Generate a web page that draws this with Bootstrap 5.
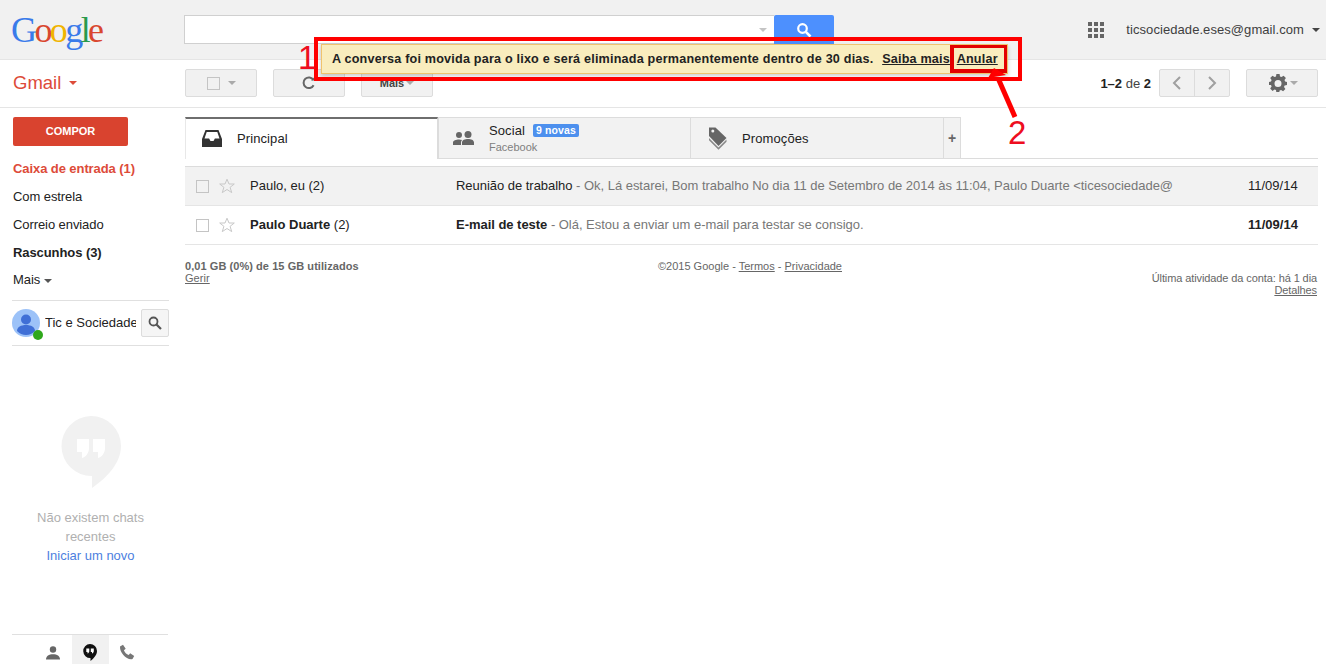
<!DOCTYPE html>
<html lang="pt">
<head>
<meta charset="utf-8">
<title>Gmail</title>
<link href="https://cdn.jsdelivr.net/npm/bootstrap@5.3.0/dist/css/bootstrap.min.css" rel="stylesheet">
<style>
html,body{height:100%;margin:0;overflow:hidden}
body{font-family:"Liberation Sans",Arial,sans-serif;font-size:13px;color:#222;background:#fff;line-height:normal}
.app-shell{height:664px;width:1326px;position:relative;overflow:hidden}
.topbar{height:60px;background:#f1f1f1;border-bottom:1px solid #e5e5e5;padding:15px 6px 0 11px}
.logo-g{width:173px;font-family:"Liberation Serif",serif;font-size:36px;line-height:30px;letter-spacing:-2.6px;flex:none}
.c-b{color:#3a7bea}.c-r{color:#d9472f}.c-y{color:#f0b400}.c-gr{color:#2a9a4b}
.search-wrap{width:650px;height:29px;flex:none}
.search-field{width:590px;height:29px;background:#fff;border:1px solid #d0d0d0;border-right:0;padding-right:7px}
.search-go{width:60px;height:29px;background:#4d90fe;border-radius:2px 2px 0 0}
.caret-d{display:inline-block;width:0;height:0;border-left:4px solid transparent;border-right:4px solid transparent;border-top:4px solid #777}
.caret-l{border-top-color:#c4c4c4}
.caret-red{border-top-color:#dd4b39}
.apps-grid{display:grid;grid-template-columns:repeat(3,4px);grid-auto-rows:4px;gap:2px;margin-right:22px}
.apps-grid i{background:#666;display:block}
.acct{color:#404040;font-size:13px;letter-spacing:.07px}
.toolbar{height:48px;border-bottom:1px solid #e5e5e5;padding:9px 8px 0 13px}
.gmail-mark{width:172px;flex:none;color:#dd4b39;font-size:18.500px;line-height:28px}
.tool-btn{height:28px;width:72px;background:#f1f1f1;border:1px solid #dcdcdc;border-radius:2px;margin-right:16px;flex:none}
.tool-btn b{font-size:11px;color:#444;margin-right:2px}
.chk{width:13px;height:13px;border:1px solid #c4c4c4;display:block;flex:none}
.pager-text{color:#444;margin-right:8px}
.pager-text b{color:#222}
.pager{width:71px;height:28px;background:#f1f1f1;border:1px solid #dcdcdc;border-radius:2px;margin-right:16px}
.pager span{flex:1;height:100%}
.pager span+span{border-left:1px solid #dcdcdc}
.cog-btn{margin-right:0;padding-left:2px}
.cog-btn svg{margin-right:3px}
.body-row{height:556px}
.side{width:185px;flex:none;position:relative;height:556px}
.compose-btn{margin:9px 0 0 13px;width:115px;height:29px;background:#d9432f;border-radius:2px;color:#fff;font-weight:700;font-size:11px;padding-bottom:2px}
.nav-links{list-style:none;margin:9px 0 0;padding:0 0 0 13px;color:#222;letter-spacing:-.08px}
.nav-links li{height:28px;line-height:28px;white-space:nowrap}
.nav-links li.now{color:#dd4b39;font-weight:700}
.nav-links li.more{height:27px;line-height:26px}
.me-row{margin:6px 0 0 12px;width:157px;height:46px;border-top:1px solid #e0e0e0;border-bottom:1px solid #e0e0e0;padding-top:8px;position:relative}
.me-pic{width:28px;height:28px;flex:none;position:relative}
.me-name{width:91px;height:28px;line-height:28px;margin-left:5px;overflow:hidden;white-space:nowrap;color:#222}
.online-dot{position:absolute;left:21px;top:21px;width:10px;height:10px;border-radius:50%;background:#2fa81c}
.me-find{width:28px;height:28px;background:#f5f5f5;border:1px solid #dcdcdc;border-radius:2px;margin-left:5px;flex:none}
.hang-empty{margin-top:70px;width:157px;margin-left:12px;text-align:center;color:#b0b0b0;line-height:19px}
.hang-empty svg{display:block;margin:0 auto 20px}
.hang-empty a{color:#4d7fe0;text-decoration:none}
.hang-tabs{position:absolute;left:12px;bottom:0;width:156px;height:30px;border-top:1px solid #e0e0e0}
.hang-tabs span{width:37px;height:30px;padding-top:5px}
.hang-tabs span.on{background:#f1f1f1}
.main-col{width:1133px;flex:none;padding-top:9px}
.tab-strip{height:42px;border-bottom:1px solid #dcdcdc}
.tab-cell{height:41px;width:253px;background:#f2f2f2;border-top:1px solid #dcdcdc;border-right:1px solid #dcdcdc;flex:none;padding-left:15px}
.tab-cell.first{background:#fff;border-top:2px solid #6e6e6e;border-right:1px solid #dcdcdc;border-left:1px solid #e8e8e8;height:42px;margin-bottom:-1px;padding-left:16px;padding-bottom:2px;position:relative}
.tab-cell.first .tab-ico{margin-right:13px}
.tab-cell.second{border-left:1px solid #dcdcdc;padding-left:14px}
.tab-cell.third{padding-left:17px}
.tab-cell.third .tab-ico{margin-right:12px}
.tab-ico{width:22px;flex:none;margin-right:14px}
.tab-name{font-size:13px;color:#222;letter-spacing:.1px}
.tab-sub{font-size:11px;color:#808080;margin-top:3px;line-height:12px}
.new-pill{background:#4d90ee;color:#fff;font-size:10.500px;font-weight:700;border-radius:2px;padding:0 3px;margin-left:8px;line-height:13px;height:13px;display:inline-block;letter-spacing:.1px;vertical-align:1px}
.tab-plus{width:17px;height:41px;background:#f2f2f2;border-top:1px solid #dcdcdc;border-right:1px solid #dcdcdc;color:#666;font-weight:700;font-size:14px}
.mail-list{margin-top:7px;border-top:1px solid #dcdcdc}
.mail-row{height:39px;border-bottom:1px solid #e5e5e5;padding-left:11px;white-space:nowrap}
.mail-row.seen{background:#f2f2f2}
.star-ico{margin-left:10px;flex:none}
.who{width:206px;margin-left:15px;flex:none;color:#222;padding-bottom:2px}
.what{width:778px;flex:none;overflow:hidden;color:#777;letter-spacing:-.03px;padding-bottom:2px}
.what b{color:#222;font-weight:400}
.unread .who b,.unread .what b,.unread .when{font-weight:700}
.when{width:62px;text-align:left;flex:none;color:#222;margin-left:14px;font-size:13px;padding-bottom:2px}
.foot-row{padding-top:15px;font-size:11px;color:#666;line-height:12px}
.foot-row a{color:#666;text-decoration:underline}
.foot-left{width:430px;letter-spacing:.06px}
.foot-mid{width:270px;text-align:center}
.foot-right{flex:1;text-align:right;padding-top:12px;padding-right:1px;letter-spacing:-.1px}
.notice-bar{position:absolute;left:321px;top:44px;width:687px;height:30px;background:#f9edbe;border:1px solid #f0c36d;box-shadow:0 2px 4px rgba(0,0,0,.2);font-weight:700;font-size:12.600px;padding-left:10px;line-height:28px;color:#222;white-space:nowrap;letter-spacing:.2px}
.notice-bar u{margin-left:5px}
.notice-bar u+u{margin-left:3px}
.mark-box{position:absolute;left:314px;top:37px;width:708px;height:44px;border:4px solid #f00;pointer-events:none}
.mark-inner{position:absolute;left:950px;top:45px;width:57px;height:28px;border:4px solid #e30000;border-top-width:3px;border-right-width:3px}
.mark-num{position:absolute;color:#ee0e20;font-size:33px;line-height:33px}
.mark-arrow{position:absolute;left:985px;top:68px}
</style>
</head>
<body>
<div class="app-shell">
  <header class="topbar d-flex align-items-start">
    <div class="logo-g"><span class="c-b">G</span><span class="c-r">o</span><span class="c-y">o</span><span class="c-b">g</span><span class="c-gr">l</span><span class="c-r">e</span></div>
    <div class="search-wrap d-flex">
      <div class="search-field d-flex align-items-center justify-content-end"><span class="caret-d caret-l"></span></div>
      <div class="search-go d-flex align-items-center justify-content-center">
        <svg width="16" height="16" viewBox="0 0 16 16"><circle cx="6.5" cy="6.5" r="4.3" fill="none" stroke="#fff" stroke-width="2.2"/><path d="M9.8 9.8 14.5 14.5" stroke="#fff" stroke-width="2.6"/></svg>
      </div>
    </div>
    <div class="ms-auto d-flex align-items-center" style="height:29px">
      <div class="apps-grid"><i></i><i></i><i></i><i></i><i></i><i></i><i></i><i></i><i></i></div>
      <span class="acct">ticsociedade.eses@gmail.com</span>
      <span class="caret-d ms-2" style="border-top-color:#444"></span>
    </div>
  </header>

  <div class="toolbar d-flex align-items-start">
    <div class="gmail-mark d-flex align-items-center">Gmail<span class="caret-d caret-red ms-2"></span></div>
    <div class="tool-btn d-flex align-items-center justify-content-center"><span class="chk me-2"></span><span class="caret-d" style="border-top-color:#aaa"></span></div>
    <div class="tool-btn d-flex align-items-center justify-content-center">
      <svg width="16" height="16" viewBox="0 0 16 16"><path d="M12.6 10.2A5.3 5.3 0 1 1 12.4 5" fill="none" stroke="#666" stroke-width="2"/><path d="M10 5.5h4.4V1z" fill="#666"/></svg>
    </div>
    <div class="tool-btn d-flex align-items-center justify-content-center"><b>Mais</b><span class="caret-d" style="border-top-color:#aaa"></span></div>
    <div class="ms-auto d-flex align-items-center" style="height:28px">
      <span class="pager-text"><b>1–2</b> de <b>2</b></span>
      <div class="pager d-flex">
        <span class="d-flex align-items-center justify-content-center"><svg width="10" height="14" viewBox="0 0 10 14"><path d="M8 1 2 7l6 6" fill="none" stroke="#a0a0a0" stroke-width="2"/></svg></span>
        <span class="d-flex align-items-center justify-content-center"><svg width="10" height="14" viewBox="0 0 10 14"><path d="M2 1l6 6-6 6" fill="none" stroke="#a0a0a0" stroke-width="2"/></svg></span>
      </div>
      <div class="tool-btn cog-btn d-flex align-items-center justify-content-center">
        <svg width="18" height="18" viewBox="0 0 18 18"><path fill="#666" fill-rule="evenodd" d="M7.4 0h3.2l.4 2.4 1.5.7L14.6 1.700l2.300 2.300-1.400 2 .6 1.500L18 7.900v3.200l-2.400.4-.6 1.500 1.400 2-2.300 2.300-2-1.400-1.500.6-.4 2.400H7.400L7 16.100l-1.500-.6-2 1.400-2.300-2.300 1.400-2-.6-1.500L0 11.100V7.900l2-.4.600-1.500-1.400-2 2.300-2.300 2 1.400 1.500-.7zM9 6a3.500 3.500 0 1 0 0 7 3.500 3.500 0 0 0 0-7z"/></svg>
        <span class="caret-d" style="border-top-color:#aaa"></span>
      </div>
    </div>
  </div>

  <div class="body-row d-flex">
    <aside class="side">
      <div class="compose-btn d-flex align-items-center justify-content-center">COMPOR</div>
      <ul class="nav-links">
        <li class="now">Caixa de entrada (1)</li>
        <li>Com estrela</li>
        <li>Correio enviado</li>
        <li class="fw-bold">Rascunhos (3)</li>
        <li class="more">Mais<span class="caret-d ms-1 align-middle" style="border-top-color:#555"></span></li>
      </ul>
      <div class="me-row d-flex">
        <div class="me-pic">
          <svg width="28" height="28" viewBox="0 0 28 28"><circle cx="14" cy="14" r="14" fill="#9cc2f8"/><circle cx="14" cy="10.500" r="5" fill="#3f6fd6"/><path d="M5 22c0-4 4-6 9-6s9 2 9 6c-2.500 2.800-5.500 4-9 4s-6.500-1.200-9-4z" fill="#3f6fd6"/></svg>
          <span class="online-dot"></span>
        </div>
        <div class="me-name">Tic e Sociedade</div>
        <div class="me-find d-flex align-items-center justify-content-center">
          <svg width="14" height="14" viewBox="0 0 14 14"><circle cx="5.500" cy="5.500" r="4" fill="none" stroke="#555" stroke-width="1.800"/><path d="M8.500 8.500 13 13" stroke="#555" stroke-width="2.200"/></svg>
        </div>
      </div>
      <div class="hang-empty">
        <svg width="60" height="72" viewBox="0 0 60 72"><path fill="#f1f1f1" d="M30 0a30 30 0 0 1 30 30c0 18-16 33-29 42V60A30 30 0 0 1 30 0z"/><path fill="#fff" d="M16 23h12v9c0 5-3 9-7 10v-6h-5zM32 23h12v9c0 5-3 9-7 10v-6h-5z" /></svg>
        <div>Não existem chats recentes</div>
        <a href="#">Iniciar um novo</a>
      </div>
      <div class="hang-tabs d-flex justify-content-center" >
        <span class="d-flex align-items-center justify-content-center">
          <svg width="14" height="14" viewBox="0 0 14 14"><circle cx="7" cy="3.500" r="3.200" fill="#666"/><path d="M0 13.500c0-3.500 3-5.200 7-5.200s7 1.700 7 5.200z" fill="#666"/></svg>
        </span>
        <span class="on d-flex align-items-center justify-content-center">
          <svg width="16" height="20" viewBox="0 0 16 20"><path d="M8 1a7 7 0 0 1 7 7c0 4-3.500 7.500-6.500 10v-3A7 7 0 0 1 8 1z" fill="#111"/><path d="M4.300 5.500h3v2.500c0 1.300-.7 2.200-1.800 2.500V9H4.300zM8.800 5.500h3v2.500c0 1.300-.7 2.200-1.800 2.500V9H8.800z" fill="#fff"/></svg>
        </span>
        <span class="d-flex align-items-center justify-content-center">
          <svg width="17" height="17" viewBox="0 0 17 17"><path d="M1 2.500 4 .8l2.700 4-1.800 1.500c.8 2.200 2.600 4 4.800 4.800l1.500-1.800 4 2.700-1.700 3C8 16.500.5 9 1 2.500z" fill="#777"/></svg>
        </span>
      </div>
    </aside>

    <main class="main-col">
      <div class="tab-strip d-flex align-items-start">
        <div class="tab-cell first d-flex align-items-center">
          <span class="tab-ico"><svg width="20" height="17" viewBox="0 0 20 17" class="d-block"><path fill-rule="evenodd" fill="#333" d="M3.500 0h13L20 9v8H0V9zM4.700 2 2.500 8.500h4.600L8.500 11h3l1.400-2.500h4.600L15.300 2z"/></svg></span>
          <span class="tab-name">Principal</span>
        </div>
        <div class="tab-cell second d-flex align-items-center">
          <span class="tab-ico"><svg width="21" height="15" viewBox="0 0 21 15" class="d-block"><circle cx="6" cy="4" r="3" fill="#666"/><circle cx="15" cy="3.500" r="3.500" fill="#666"/><path d="M0 14v-2.500C0 9.500 3 8.500 6 8.500c1.200 0 2.300.2 3.200.5-.8.600-1.200 1.500-1.200 2.500v2.500zM9 14v-2.500c0-2.500 3-3.500 6-3.500s6 1 6 3.500V14z" fill="#666"/></svg></span>
          <div>
            <div class="tab-name">Social<span class="new-pill">9 novas</span></div>
            <div class="tab-sub">Facebook</div>
          </div>
        </div>
        <div class="tab-cell third d-flex align-items-center">
          <span class="tab-ico"><svg width="20" height="24" viewBox="0 0 20 24" class="d-block"><path d="M1 1.500h6.500L18.500 12l-8 8L1 10z" fill="#666"/><circle cx="4.800" cy="5" r="1.500" fill="#f2f2f2"/><path d="M1 12l9.500 9.500 8-8v2.300l-8 8L1 14.300z" fill="#888"/></svg></span>
          <span class="tab-name">Promoções</span>
        </div>
        <div class="tab-plus d-flex align-items-center justify-content-center">+</div>
      </div>
      <div class="mail-list">
        <div class="mail-row seen d-flex align-items-center">
          <span class="chk"></span>
          <svg class="star-ico" width="16" height="16" viewBox="0 0 16 16"><path d="M8 1.200 10 6h5.300l-4.200 3.300 1.600 5.300L8 11.500l-4.700 3.100 1.600-5.300L.7 6H6z" fill="none" stroke="#c8c8c8"/></svg>
          <span class="who">Paulo, eu (2)</span>
          <span class="what"><b>Reunião de trabalho</b> - Ok, Lá estarei, Bom trabalho No dia 11 de Setembro de 2014 às 11:04, Paulo Duarte &lt;ticesociedade@</span>
          <span class="when">11/09/14</span>
        </div>
        <div class="mail-row unread d-flex align-items-center">
          <span class="chk"></span>
          <svg class="star-ico" width="16" height="16" viewBox="0 0 16 16"><path d="M8 1.200 10 6h5.300l-4.200 3.300 1.600 5.300L8 11.500l-4.700 3.100 1.600-5.300L.7 6H6z" fill="none" stroke="#c8c8c8"/></svg>
          <span class="who"><b>Paulo Duarte</b> (2)</span>
          <span class="what"><b>E-mail de teste</b> - Olá, Estou a enviar um e-mail para testar se consigo.</span>
          <span class="when">11/09/14</span>
        </div>
      </div>
      <div class="foot-row d-flex">
        <div class="foot-left"><b>0,01 GB (0%) de 15 GB utilizados</b><br><a href="#">Gerir</a></div>
        <div class="foot-mid">©2015 Google - <a href="#">Termos</a> - <a href="#">Privacidade</a></div>
        <div class="foot-right">Última atividade da conta: há 1 dia<br><a href="#">Detalhes</a></div>
      </div>
    </main>
  </div>

  <div class="notice-bar">A conversa foi movida para o lixo e será eliminada permanentemente dentro de 30 dias. <u>Saiba mais</u> <u>Anular</u></div>
  <div class="mark-box"></div>
  <div class="mark-inner"></div>
  <span class="mark-num" style="left:298px;top:41px">1</span>
  <span class="mark-num" style="left:1008px;top:116px">2</span>
  <svg class="mark-arrow" width="40" height="52" viewBox="0 0 40 52"><path d="M30 49 13 10" stroke="#f00" stroke-width="5" fill="none"/><path d="M9 0 3 10 21 7z" fill="#f00"/></svg>
</div>
<script src="https://cdn.jsdelivr.net/npm/bootstrap@5.3.0/dist/js/bootstrap.bundle.min.js"></script>
</body>
</html>
